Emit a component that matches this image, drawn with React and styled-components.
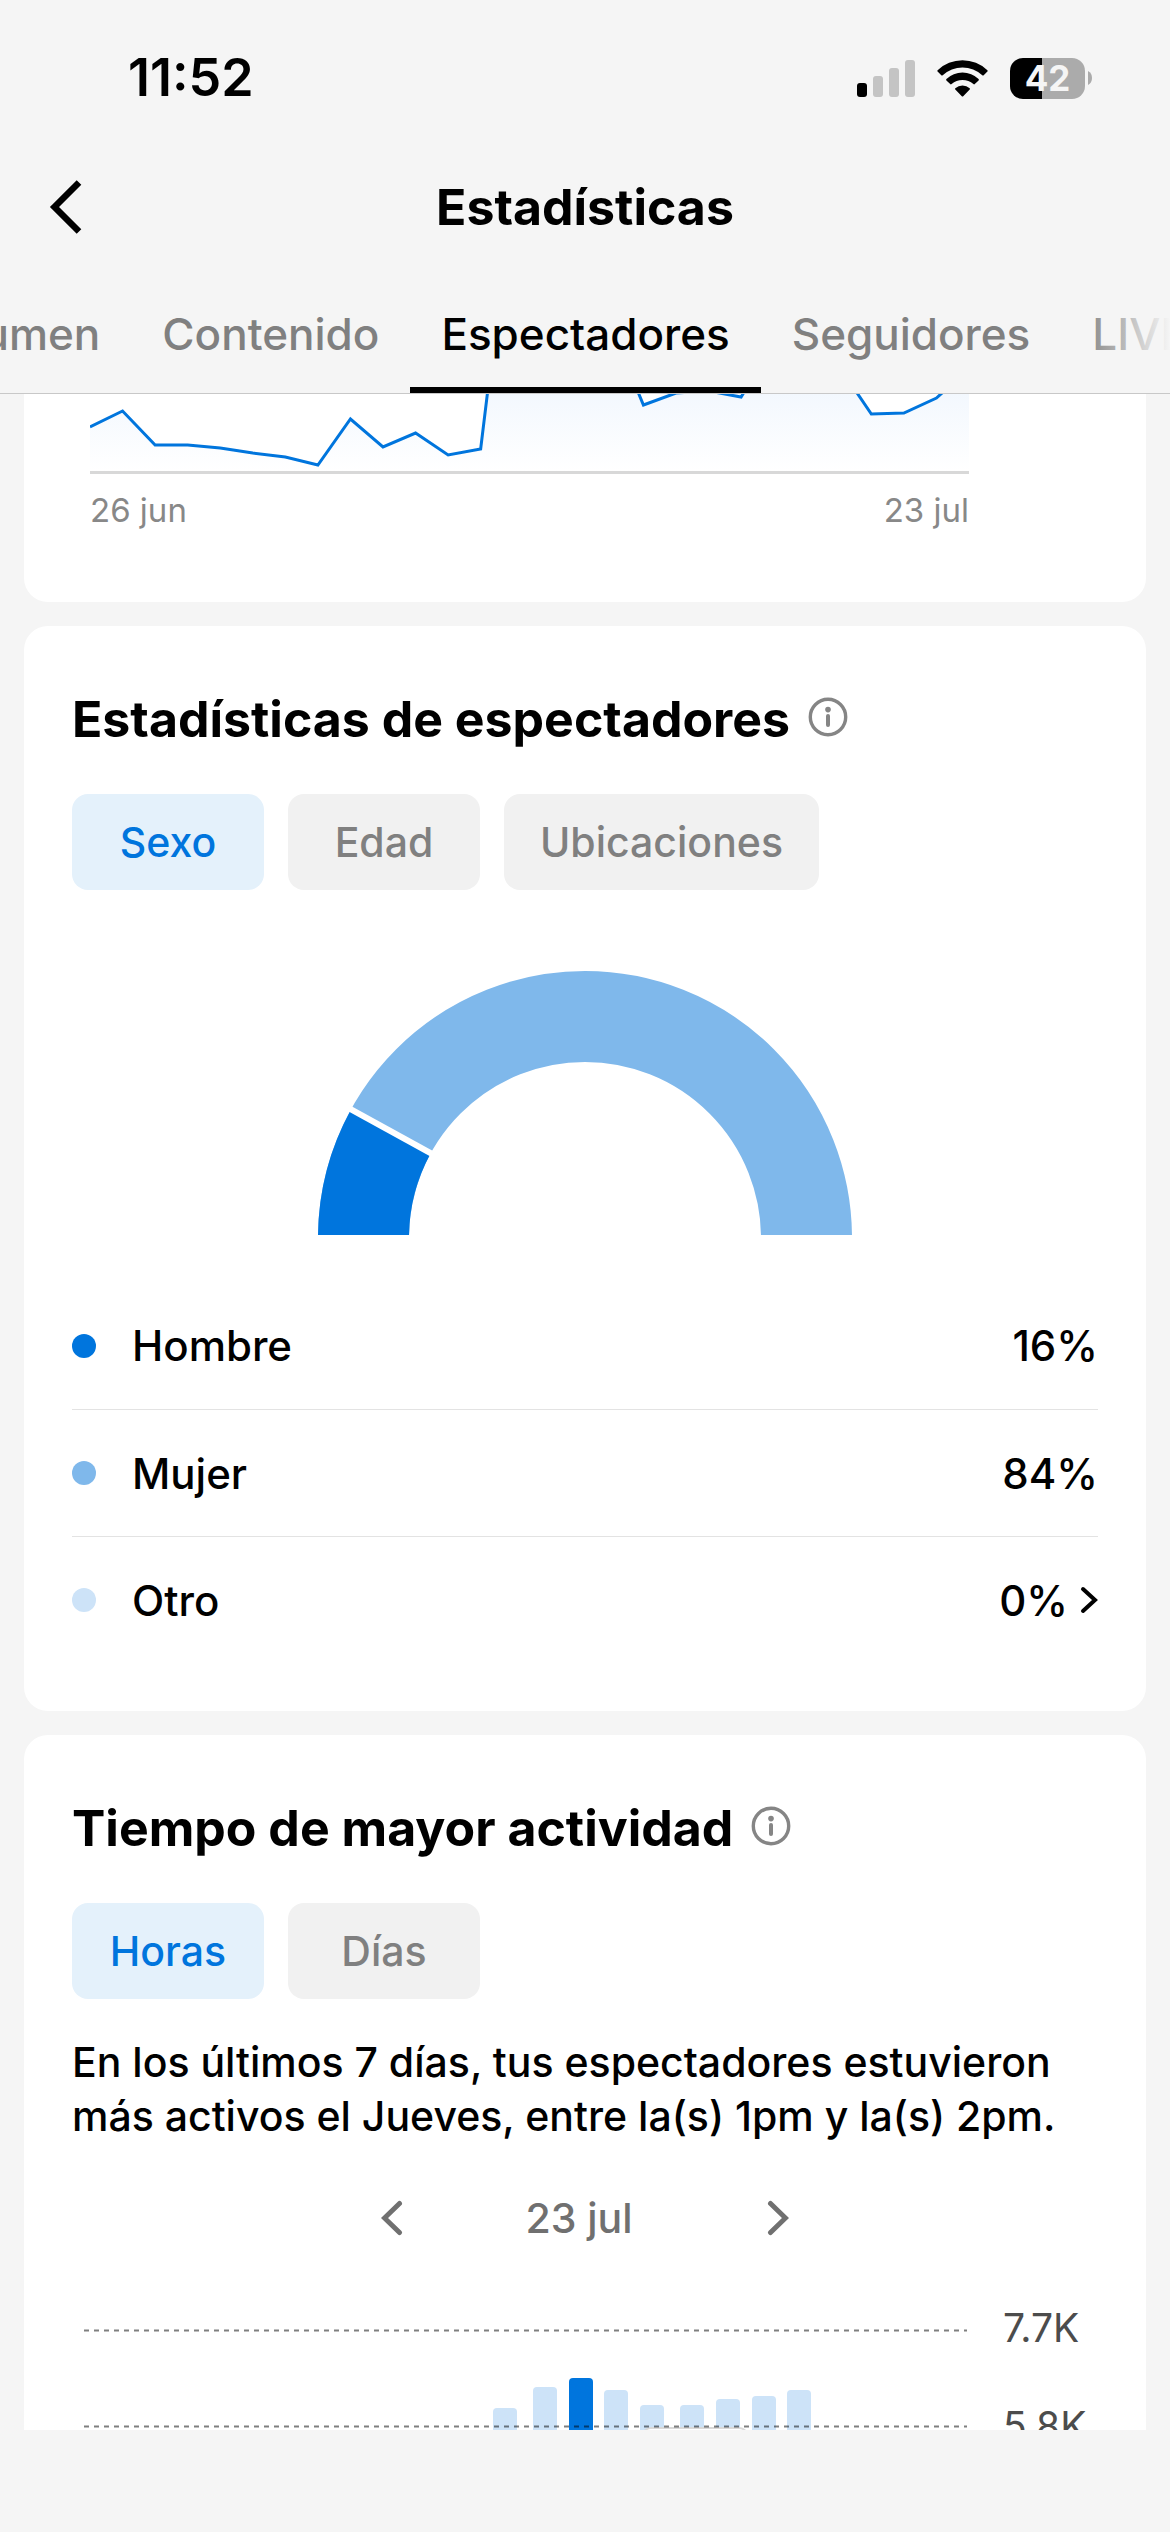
import { useLayoutEffect, useRef, useState } from "react";
import styled, { createGlobalStyle } from "styled-components";

const EstilosGlobales = createGlobalStyle`
    * {
        box-sizing: border-box;
    }

    body {
        margin: 0;
        background-color: #F5F5F5;
        color: #000;
        font-family: Inter, 'Liberation Sans', sans-serif;
    }

    button {
        border: none;
        background: none;
        padding: 0;
        font-family: inherit;
        color: inherit;
        cursor: pointer;
    }
`

const Pantalla = styled.div`
    display: flex;
    flex-direction: column;
    height: 100vh;
    overflow: hidden;
`

const BarraEstado = styled.div`
    display: flex;
    justify-content: space-between;
    align-items: center;
    padding: 42px 78px 0 128px;
    height: 114px;
    flex-shrink: 0;
`

const Hora = styled.span`
    font-size: 52px;
    font-weight: 600;
    line-height: 72px;
`

const IconosEstado = styled.div`
    display: flex;
    align-items: center;
    gap: 22px;
`

const Bateria = styled.div`
    display: flex;
    align-items: center;
    gap: 3px;
`

const BateriaCuerpo = styled.div`
    width: 75px;
    height: 41px;
    border-radius: 13px;
    background: linear-gradient(90deg, #000 32px, #ABABAB 32px);
    color: #F5F5F5;
    font-size: 35px;
    font-weight: 700;
    line-height: 41px;
    text-align: center;
`

const Encabezado = styled.header`
    display: grid;
    grid-template-columns: 120px 1fr 120px;
    align-items: center;
    height: 186px;
    flex-shrink: 0;
`

const BotonVolver = styled.button`
    display: flex;
    padding-left: 46px;
`

const TituloPagina = styled.h1`
    margin: 0;
    font-size: 50px;
    font-weight: 700;
    line-height: 60px;
    text-align: center;
`

const ZonaPestanas = styled.nav`
    position: relative;
    flex-shrink: 0;
    border-bottom: 1px solid #C8C8C8;

    &::after {
        content: '';
        position: absolute;
        top: 0;
        right: 0;
        width: 90px;
        height: 100%;
        background: linear-gradient(90deg, rgba(245, 245, 245, 0), #F5F5F5);
        pointer-events: none;
    }
`

const Pestanas = styled.div`
    position: relative;
    display: flex;
    overflow-x: auto;
    scrollbar-width: none;
`

const Pestana = styled.button`
    flex-shrink: 0;
    height: 93px;
    padding: 0 31px 20px;
    border-bottom: 6px solid ${props => props.$activa ? '#000' : 'transparent'};
    color: ${props => props.$activa ? '#000' : '#808080'};
    font-size: 44px;
    font-weight: 500;
    line-height: 54px;
`

const Contenido = styled.main`
    flex: 1;
    min-height: 0;
    overflow: hidden;
    display: flex;
    flex-direction: column;
    gap: 24px;
    padding: 0 24px;
`

const Tarjeta = styled.section`
    flex-shrink: 0;
    padding: 66px 48px 48px;
    border-radius: ${props => props.$cortada ? '0 0 24px 24px' : '24px'};
    background-color: #FFF;
`

const Evolucion = styled.div`
    margin: -66px 129px 24px 18px;
`

const EvolucionGrafico = styled.svg`
    display: block;
    width: 100%;
    height: 80px;
`

const Fechas = styled.div`
    display: flex;
    justify-content: space-between;
    margin-top: 16px;
    color: #888;
    font-size: 33px;
    line-height: 40px;
`

const TituloTarjeta = styled.h2`
    display: flex;
    align-items: center;
    gap: 18px;
    margin: 0;
    font-size: 50px;
    font-weight: 700;
    line-height: 54px;
`

const BotonInfo = styled.button`
    display: flex;
    padding-bottom: 4px;
`

const Filtros = styled.div`
    display: flex;
    gap: 24px;
    margin-top: 48px;
`

const Filtro = styled.button`
    min-width: 192px;
    height: 96px;
    padding: 0 36px;
    border-radius: 16px;
    background-color: ${props => props.$activo ? '#E4F1FB' : '#F1F1F1'};
    color: ${props => props.$activo ? '#0075DD' : '#808080'};
    font-size: 41px;
    font-weight: 500;
`

const Dona = styled.svg`
    display: block;
    width: 534px;
    height: 264px;
    margin: 81px auto 47px;
`

const Leyenda = styled.ul`
    margin: 0;
    padding: 0;
    list-style: none;
`

const Fila = styled.li`
    display: flex;
    align-items: center;
    height: 127px;
    font-size: 42px;
    font-weight: 500;

    & + & {
        border-top: 1px solid #E3E3E3;
    }
`

const Punto = styled.span`
    width: 24px;
    height: 24px;
    margin-right: 36px;
    border-radius: 50%;
    background-color: ${props => props.$color};
`

const Valor = styled.span`
    display: flex;
    align-items: center;
    gap: 12px;
    margin-left: auto;
`

const Resumen = styled.p`
    margin: 36px 0 0;
    font-size: 41px;
    font-weight: 500;
    line-height: 54px;
`

const SelectorFecha = styled.div`
    display: flex;
    justify-content: center;
    align-items: center;
    gap: 122px;
    margin-top: 48px;
    color: #707070;
    font-size: 41px;
    font-weight: 500;
    line-height: 54px;

    button {
        display: flex;
    }

    span {
        padding-right: 12px;
    }
`

const Actividad = styled.div`
    display: flex;
    gap: 36px;
    margin-top: 60px;
    padding-left: 12px;
`

const ActividadGrafico = styled.svg`
    flex: 1;
    height: 124px;
    margin-top: 24px;
`

const Escala = styled.div`
    display: flex;
    flex-direction: column;
    gap: 52px;
    width: 95px;
    color: #4C4C4C;
    font-size: 39px;
    line-height: 46px;
`

const BarraInicio = styled.footer`
    height: 102px;
    flex-shrink: 0;
`

const pestanas = ['Resumen', 'Contenido', 'Espectadores', 'Seguidores', 'LIVE']

const espectadores = [33, 17, 51, 51, 54, 59, 63, 71, 25, 53, 39, 61, 55, -213, -190, -170, -67, 11, -1, -3, 3, -50, -60, -28, 20, 19, 4, -25]

const sexos = [
    { nombre: 'Hombre', valor: '16%', color: '#0075DD' },
    { nombre: 'Mujer', valor: '84%', color: '#7FB8EB' },
    { nombre: 'Otro', valor: '0%', color: '#CDE3F8', enlace: true },
]

const barras = [
    { x: 409, y: 79 },
    { x: 449, y: 58 },
    { x: 485, y: 49, maxima: true },
    { x: 520, y: 61 },
    { x: 556, y: 76 },
    { x: 596, y: 76 },
    { x: 632, y: 70 },
    { x: 668, y: 67 },
    { x: 703, y: 61 },
]

function Chevron({ ancho, alto, grosor, derecha }) {
    const m = grosor / 2 + 1
    const puntos = derecha
        ? `${m},${m} ${ancho - m},${alto / 2} ${m},${alto - m}`
        : `${ancho - m},${m} ${m},${alto / 2} ${ancho - m},${alto - m}`
    return (
        <svg width={ancho} height={alto} fill="none" stroke="currentColor" strokeWidth={grosor} strokeLinecap="round" aria-hidden="true">
            <polyline points={puntos} />
        </svg>
    )
}

function Info() {
    return (
        <BotonInfo aria-label="Información">
            <svg width="40" height="40" viewBox="0 0 40 40" fill="none" stroke="#858585" aria-hidden="true">
                <circle cx="20" cy="20" r="17.7" strokeWidth="3.4" />
                <circle cx="20" cy="12.6" r="2.8" fill="#858585" stroke="none" />
                <path d="M20 19v9" strokeWidth="4" strokeLinecap="round" />
            </svg>
        </BotonInfo>
    )
}

function GrupoFiltros({ opciones }) {
    const [elegido, setElegido] = useState(opciones[0])
    return (
        <Filtros>
            {opciones.map(opcion => (
                <Filtro key={opcion} $activo={opcion === elegido} onClick={() => setElegido(opcion)}>
                    {opcion}
                </Filtro>
            ))}
        </Filtros>
    )
}

function IconosSistema() {
    return (
        <IconosEstado>
            <svg width="58" height="38" aria-hidden="true">
                <rect x="0" y="24" width="10" height="14" rx="3" fill="#000" />
                <rect x="16" y="17" width="10" height="21" rx="3" fill="#C4C4C4" />
                <rect x="32" y="9" width="10" height="29" rx="3" fill="#C4C4C4" />
                <rect x="48" y="1" width="10" height="37" rx="3" fill="#C4C4C4" />
            </svg>
            <svg width="51" height="38" viewBox="0 0 51 38" aria-hidden="true">
                <path d="M0.6 11.2a36 36 0 0 1 49.8 0q.6.8 0 1.4l-3.7 3.7q-.7.5-1.4 0a29 29 0 0 0-39.6 0q-.7.5-1.4 0l-3.7-3.7q-.6-.6 0-1.4z" />
                <path d="M9.4 20a23.5 23.5 0 0 1 32.2 0q.6.8 0 1.4l-3.8 3.7q-.7.6-1.4 0a16.2 16.2 0 0 0-21.8 0q-.7.6-1.4 0l-3.8-3.7q-.6-.6 0-1.4z" />
                <path d="M18.3 29.2a11 11 0 0 1 14.4 0q.6.7 0 1.4l-6.5 6.6q-.7.6-1.4 0l-6.5-6.6q-.6-.7 0-1.4z" />
            </svg>
            <Bateria>
                <BateriaCuerpo>42</BateriaCuerpo>
                <svg width="4" height="14" aria-hidden="true">
                    <path d="M0 0q4 2 4 7t-4 7z" fill="#ABABAB" />
                </svg>
            </Bateria>
        </IconosEstado>
    )
}

function BarraPestanas() {
    const [activa, setActiva] = useState('Espectadores')
    const lista = useRef(null)

    // la pestaña activa queda centrada
    useLayoutEffect(() => {
        const boton = lista.current.querySelector('[aria-current]')
        lista.current.scrollLeft = boton.offsetLeft + boton.offsetWidth / 2 - lista.current.clientWidth / 2
    }, [activa])

    return (
        <ZonaPestanas>
            <Pestanas ref={lista}>
                {pestanas.map(pestana => (
                    <Pestana
                        key={pestana}
                        $activa={pestana === activa}
                        aria-current={pestana === activa ? 'page' : undefined}
                        onClick={() => setActiva(pestana)}
                    >
                        {pestana}
                    </Pestana>
                ))}
            </Pestanas>
        </ZonaPestanas>
    )
}

function GraficoEvolucion() {
    const paso = 879 / (espectadores.length - 1)
    const linea = espectadores.map((y, i) => `${i * paso},${y}`).join(' ')
    return (
        <EvolucionGrafico viewBox="0 0 879 80" preserveAspectRatio="none" aria-hidden="true">
            <defs>
                <linearGradient id="relleno" gradientUnits="userSpaceOnUse" x1="0" y1="0" x2="0" y2="77">
                    <stop offset="0" stopColor="#F3F8FE" />
                    <stop offset="1" stopColor="#FFF" />
                </linearGradient>
            </defs>
            <polygon points={`0,77 ${linea} 879,77`} fill="url(#relleno)" />
            <polyline points={linea} fill="none" stroke="#0075DD" strokeWidth="3" />
            <rect y="77" width="879" height="3" fill="#D8D8D8" />
        </EvolucionGrafico>
    )
}

function GraficoActividad() {
    return (
        <ActividadGrafico viewBox="0 0 883 124" preserveAspectRatio="none" aria-hidden="true">
            {barras.map(barra => (
                <rect key={barra.x} x={barra.x} y={barra.y} width="24" height="120" rx="4" fill={barra.maxima ? '#0075DD' : '#CDE3F8'} />
            ))}
            <rect x="558" y="99" width="106" height="60" rx="9" fill="#FFF" stroke="#D9D9D9" strokeWidth="2" />
            <path d="M0 1.5H883M0 97.5H883" stroke="#000" strokeOpacity="0.5" strokeWidth="2" strokeDasharray="5 5" />
        </ActividadGrafico>
    )
}

function App() {
    return (
        <Pantalla>
            <EstilosGlobales />
            <BarraEstado>
                <Hora>11:52</Hora>
                <IconosSistema />
            </BarraEstado>
            <Encabezado>
                <BotonVolver aria-label="Volver">
                    <svg width="38" height="54" fill="none" stroke="#000" strokeWidth="6.5" aria-hidden="true">
                        <path d="M33 2.5L8.5 27l24.5 24.5" />
                    </svg>
                </BotonVolver>
                <TituloPagina>Estadísticas</TituloPagina>
            </Encabezado>
            <BarraPestanas />
            <Contenido>
                <Tarjeta $cortada>
                    <Evolucion>
                        <GraficoEvolucion />
                        <Fechas>
                            <span>26 jun</span>
                            <span>23 jul</span>
                        </Fechas>
                    </Evolucion>
                </Tarjeta>
                <Tarjeta>
                    <TituloTarjeta>Estadísticas de espectadores <Info /></TituloTarjeta>
                    <GrupoFiltros opciones={['Sexo', 'Edad', 'Ubicaciones']} />
                    <Dona viewBox="0 0 534 264" aria-hidden="true">
                        <path d="M45.5 267A221.5 221.5 0 0 1 488.5 267" fill="none" stroke="#7FB8EB" strokeWidth="91" />
                        <path d="M45.5 267A221.5 221.5 0 0 1 72.9 160.3" fill="none" stroke="#0075DD" strokeWidth="91" />
                        <path d="M267 267L18 130.1" stroke="#FFF" strokeWidth="6" />
                    </Dona>
                    <Leyenda>
                        {sexos.map(sexo => (
                            <Fila key={sexo.nombre}>
                                <Punto $color={sexo.color} />
                                {sexo.nombre}
                                <Valor>
                                    {sexo.valor}
                                    {sexo.enlace && <Chevron ancho={18} alto={28} grosor={4} derecha />}
                                </Valor>
                            </Fila>
                        ))}
                    </Leyenda>
                </Tarjeta>
                <Tarjeta>
                    <TituloTarjeta>Tiempo de mayor actividad <Info /></TituloTarjeta>
                    <GrupoFiltros opciones={['Horas', 'Días']} />
                    <Resumen>
                        En los últimos 7 días, tus espectadores estuvieron más activos el Jueves, entre la(s) 1pm y la(s) 2pm.
                    </Resumen>
                    <SelectorFecha>
                        <button aria-label="Día anterior"><Chevron ancho={22} alto={36} grosor={5} /></button>
                        <span>23 jul</span>
                        <button aria-label="Día siguiente"><Chevron ancho={22} alto={36} grosor={5} derecha /></button>
                    </SelectorFecha>
                    <Actividad>
                        <GraficoActividad />
                        <Escala>
                            <span>7.7K</span>
                            <span>5.8K</span>
                        </Escala>
                    </Actividad>
                </Tarjeta>
            </Contenido>
            <BarraInicio />
        </Pantalla>
    )
}

export default App;
